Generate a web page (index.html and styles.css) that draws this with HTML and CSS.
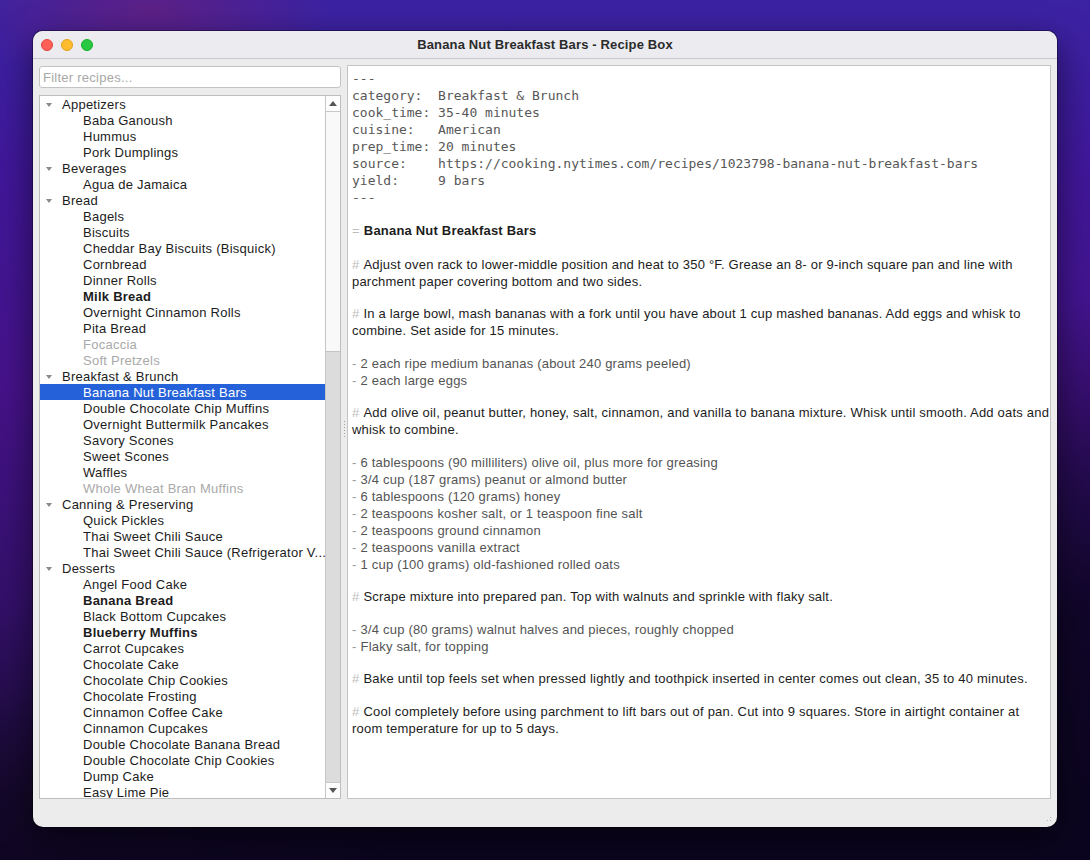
FILE: index.html
```html
<!DOCTYPE html>
<html lang="en">
<head>
<meta charset="utf-8">
<title>Banana Nut Breakfast Bars - Recipe Box</title>
<link rel="stylesheet" href="styles.css">
</head>
<body>
<div class="desktop">
  <div class="window">
    <div class="titlebar">
      <div class="lights">
        <span class="light red"></span>
        <span class="light yellow"></span>
        <span class="light green"></span>
      </div>
      <div class="title">Banana Nut Breakfast Bars - Recipe Box</div>
    </div>
    <div class="content">
      <div class="sidebar">
        <input class="filter" type="text" placeholder="Filter recipes...">
        <div class="tree">
          <ul class="rows">
            <li class="cat"><span class="tri"></span>Appetizers</li>
            <li class="item">Baba Ganoush</li>
            <li class="item">Hummus</li>
            <li class="item">Pork Dumplings</li>
            <li class="cat"><span class="tri"></span>Beverages</li>
            <li class="item">Agua de Jamaica</li>
            <li class="cat"><span class="tri"></span>Bread</li>
            <li class="item">Bagels</li>
            <li class="item">Biscuits</li>
            <li class="item">Cheddar Bay Biscuits (Bisquick)</li>
            <li class="item">Cornbread</li>
            <li class="item">Dinner Rolls</li>
            <li class="item bold">Milk Bread</li>
            <li class="item">Overnight Cinnamon Rolls</li>
            <li class="item">Pita Bread</li>
            <li class="item dim">Focaccia</li>
            <li class="item dim">Soft Pretzels</li>
            <li class="cat"><span class="tri"></span>Breakfast &amp; Brunch</li>
            <li class="item selected">Banana Nut Breakfast Bars</li>
            <li class="item">Double Chocolate Chip Muffins</li>
            <li class="item">Overnight Buttermilk Pancakes</li>
            <li class="item">Savory Scones</li>
            <li class="item">Sweet Scones</li>
            <li class="item">Waffles</li>
            <li class="item dim">Whole Wheat Bran Muffins</li>
            <li class="cat"><span class="tri"></span>Canning &amp; Preserving</li>
            <li class="item">Quick Pickles</li>
            <li class="item">Thai Sweet Chili Sauce</li>
            <li class="item">Thai Sweet Chili Sauce (Refrigerator V...</li>
            <li class="cat"><span class="tri"></span>Desserts</li>
            <li class="item">Angel Food Cake</li>
            <li class="item bold">Banana Bread</li>
            <li class="item">Black Bottom Cupcakes</li>
            <li class="item bold">Blueberry Muffins</li>
            <li class="item">Carrot Cupcakes</li>
            <li class="item">Chocolate Cake</li>
            <li class="item">Chocolate Chip Cookies</li>
            <li class="item">Chocolate Frosting</li>
            <li class="item">Cinnamon Coffee Cake</li>
            <li class="item">Cinnamon Cupcakes</li>
            <li class="item">Double Chocolate Banana Bread</li>
            <li class="item">Double Chocolate Chip Cookies</li>
            <li class="item">Dump Cake</li>
            <li class="item">Easy Lime Pie</li>
          </ul>
          <div class="scrollbar">
            <div class="arrow up"><span></span></div>
            <div class="track"><div class="thumb"></div></div>
            <div class="arrow down"><span></span></div>
          </div>
        </div>
      </div>
      <div class="splitter"><span class="grip"></span></div>
      <div class="editor">
        <pre class="front">---
category:  Breakfast &amp; Brunch
cook_time: 35-40 minutes
cuisine:   American
prep_time: 20 minutes
source:    https://cooking.nytimes.com/recipes/1023798-banana-nut-breakfast-bars
yield:     9 bars
---</pre>
        <p class="heading"><span class="mk">=</span>Banana Nut Breakfast Bars</p>
        <p class="step"><span class="mk">#</span>Adjust oven rack to lower-middle position and heat to 350 °F. Grease an 8- or 9-inch square pan and line with parchment paper covering bottom and two sides.</p>
        <p class="step"><span class="mk">#</span>In a large bowl, mash bananas with a fork until you have about 1 cup mashed bananas. Add eggs and whisk to combine. Set aside for 15 minutes.</p>
        <ul class="ingr">
          <li><span class="dash">-</span>2 each ripe medium bananas (about 240 grams peeled)</li>
          <li><span class="dash">-</span>2 each large eggs</li>
        </ul>
        <p class="step"><span class="mk">#</span>Add olive oil, peanut butter, honey, salt, cinnamon, and vanilla to banana mixture. Whisk until smooth. Add oats and whisk to combine.</p>
        <ul class="ingr">
          <li><span class="dash">-</span>6 tablespoons (90 milliliters) olive oil, plus more for greasing</li>
          <li><span class="dash">-</span>3/4 cup (187 grams) peanut or almond butter</li>
          <li><span class="dash">-</span>6 tablespoons (120 grams) honey</li>
          <li><span class="dash">-</span>2 teaspoons kosher salt, or 1 teaspoon fine salt</li>
          <li><span class="dash">-</span>2 teaspoons ground cinnamon</li>
          <li><span class="dash">-</span>2 teaspoons vanilla extract</li>
          <li><span class="dash">-</span>1 cup (100 grams) old-fashioned rolled oats</li>
        </ul>
        <p class="step"><span class="mk">#</span>Scrape mixture into prepared pan. Top with walnuts and sprinkle with flaky salt.</p>
        <ul class="ingr">
          <li><span class="dash">-</span>3/4 cup (80 grams) walnut halves and pieces, roughly chopped</li>
          <li><span class="dash">-</span>Flaky salt, for topping</li>
        </ul>
        <p class="step"><span class="mk">#</span>Bake until top feels set when pressed lightly and toothpick inserted in center comes out clean, 35 to 40 minutes.</p>
        <p class="step"><span class="mk">#</span>Cool completely before using parchment to lift bars out of pan. Cut into 9 squares. Store in airtight container at room temperature for up to 5 days.</p>
      </div>
    </div>
    <div class="statusbar"><span class="sizegrip"></span></div>
  </div>
</div>
</body>
</html>
```

FILE: styles.css
```css
* { box-sizing: border-box; }

html, body {
  margin: 0;
  padding: 0;
  width: 1090px;
  height: 860px;
  overflow: hidden;
}

body {
  font-family: "Liberation Sans", Arial, sans-serif;
  font-size: 13px;
  color: #1c1c1c;
}

.desktop {
  width: 1090px;
  height: 860px;
  padding: 31px 33px 33px 33px;
  background:
    radial-gradient(ellipse 260px 120px at 150px 10px, rgba(120, 30, 110, 0.55), rgba(120, 30, 110, 0) 70%),
    linear-gradient(160deg, rgba(0,0,0,0) 55%, rgba(10, 4, 30, 0.85) 80%),
    linear-gradient(180deg, #3b23a3 0%, #40179a 20%, #46128a 45%, #33106a 70%, #180a30 92%, #140828 100%);
}

.window {
  width: 1024px;
  height: 796px;
  border-radius: 10px;
  overflow: hidden;
  background: #ececec;
  display: flex;
  flex-direction: column;
  box-shadow: 0 12px 36px rgba(0, 0, 0, 0.55), 0 0 0 1px rgba(0, 0, 0, 0.35);
}

.titlebar {
  height: 28px;
  flex: none;
  background: #ecebf0;
  border-bottom: 1px solid #c9c8cc;
  display: flex;
  align-items: center;
  position: relative;
}

.lights {
  display: flex;
  gap: 8px;
  padding-left: 8px;
}

.light {
  width: 12px;
  height: 12px;
  border-radius: 50%;
  display: block;
}
.light.red { background: #fe5f57; border: 0.5px solid #e2463f; }
.light.yellow { background: #febc2e; border: 0.5px solid #e1a116; }
.light.green { background: #28c840; border: 0.5px solid #14ae2a; }

.title {
  position: absolute;
  left: 0;
  right: 0;
  top: 6px;
  text-align: center;
  font-weight: bold;
  font-size: 13px;
  color: #2b2b2b;
  letter-spacing: 0.15px;
}

.content {
  flex: 1;
  display: flex;
  padding: 6px 6px 0 6px;
  min-height: 0;
}

.sidebar {
  width: 302px;
  flex: none;
  display: flex;
  flex-direction: column;
  gap: 7px;
}

.filter {
  margin-top: 1px;
  height: 22px;
  width: 100%;
  border: 1px solid #c3c3c3;
  border-radius: 3px;
  background: #fff;
  font-family: "Liberation Sans", Arial, sans-serif;
  font-size: 13px;
  padding: 0 3px;
  letter-spacing: 0.25px;
  outline: none;
}
.filter::placeholder { color: #a8a8a8; }

.tree {
  height: 704px;
  border: 1px solid #bdbdbd;
  background: #fff;
  display: flex;
  overflow: hidden;
}

.rows {
  list-style: none;
  margin: 0;
  padding: 0;
  flex: 1;
  min-width: 0;
  overflow: hidden;
  letter-spacing: 0.25px;
}

.rows li {
  height: 16px;
  line-height: 17px;
  white-space: nowrap;
  overflow: hidden;
}

.cat {
  display: flex;
  align-items: center;
  padding-left: 6px;
}

.tri {
  width: 0;
  height: 0;
  border-left: 3.5px solid transparent;
  border-right: 3.5px solid transparent;
  border-top: 4px solid #8a8a8a;
  margin-right: 10px;
  margin-top: 1px;
}

.item { padding-left: 43px; }
.item.bold { font-weight: bold; }
.item.dim { color: #a9a9a9; }
.item.selected { background: #2562d9; color: #fff; }

.scrollbar {
  width: 15px;
  flex: none;
  border-left: 1px solid #c6c6c6;
  background: #fafafa;
  display: flex;
  flex-direction: column;
}

.arrow {
  height: 16px;
  flex: none;
  background: #fdfdfd;
  display: flex;
  align-items: center;
  justify-content: center;
}
.arrow.up { border-bottom: 1px solid #c9c9c9; }
.arrow.down { border-top: 1px solid #c9c9c9; }
.arrow span {
  width: 0;
  height: 0;
  border-left: 4px solid transparent;
  border-right: 4px solid transparent;
}
.arrow.up span { border-bottom: 5px solid #555; }
.arrow.down span { border-top: 5px solid #555; }

.track {
  flex: 1;
  background: #dcdcdc;
  display: flex;
  flex-direction: column;
}

.thumb {
  height: 240px;
  background: #f9f9f9;
  border-bottom: 1px solid #c4c4c4;
}

.splitter {
  width: 6px;
  flex: none;
  display: flex;
  align-items: center;
  justify-content: center;
}

.grip {
  width: 1px;
  height: 16px;
  background-image: linear-gradient(#a0a0a0 50%, transparent 50%);
  background-size: 1px 3px;
  margin-bottom: 6px;
}

.editor {
  flex: 1;
  height: 734px;
  border: 1px solid #c4c4c4;
  background: #fff;
  padding: 4px 0 0 4px;
  overflow: hidden;
  letter-spacing: 0.2px;
  line-height: 17px;
}

.front {
  margin: 0 0 15.5px 0;
  font-family: "DejaVu Sans Mono", "Liberation Mono", monospace;
  font-size: 13px;
  line-height: 17px;
  color: #575757;
  letter-spacing: 0;
}

.heading {
  margin: 0 0 17px 0;
  font-weight: bold;
}

.step {
  margin: 0 0 15.5px 0;
}

.mk {
  color: #bdbdbd;
  font-weight: normal;
  margin-right: 4px;
}

.ingr {
  list-style: none;
  margin: 0 0 15.5px 0;
  padding: 0;
  color: #545454;
}

.dash {
  color: #9a9a9a;
  margin-right: 4px;
}

.statusbar {
  height: 28px;
  flex: none;
  position: relative;
}

.sizegrip {
  position: absolute;
  right: 4px;
  bottom: 4px;
  width: 10px;
  height: 10px;
  background-image: radial-gradient(circle, #b8b8b8 0.8px, transparent 1px);
  background-size: 3px 3px;
  clip-path: polygon(100% 0, 100% 100%, 0 100%);
}
```
